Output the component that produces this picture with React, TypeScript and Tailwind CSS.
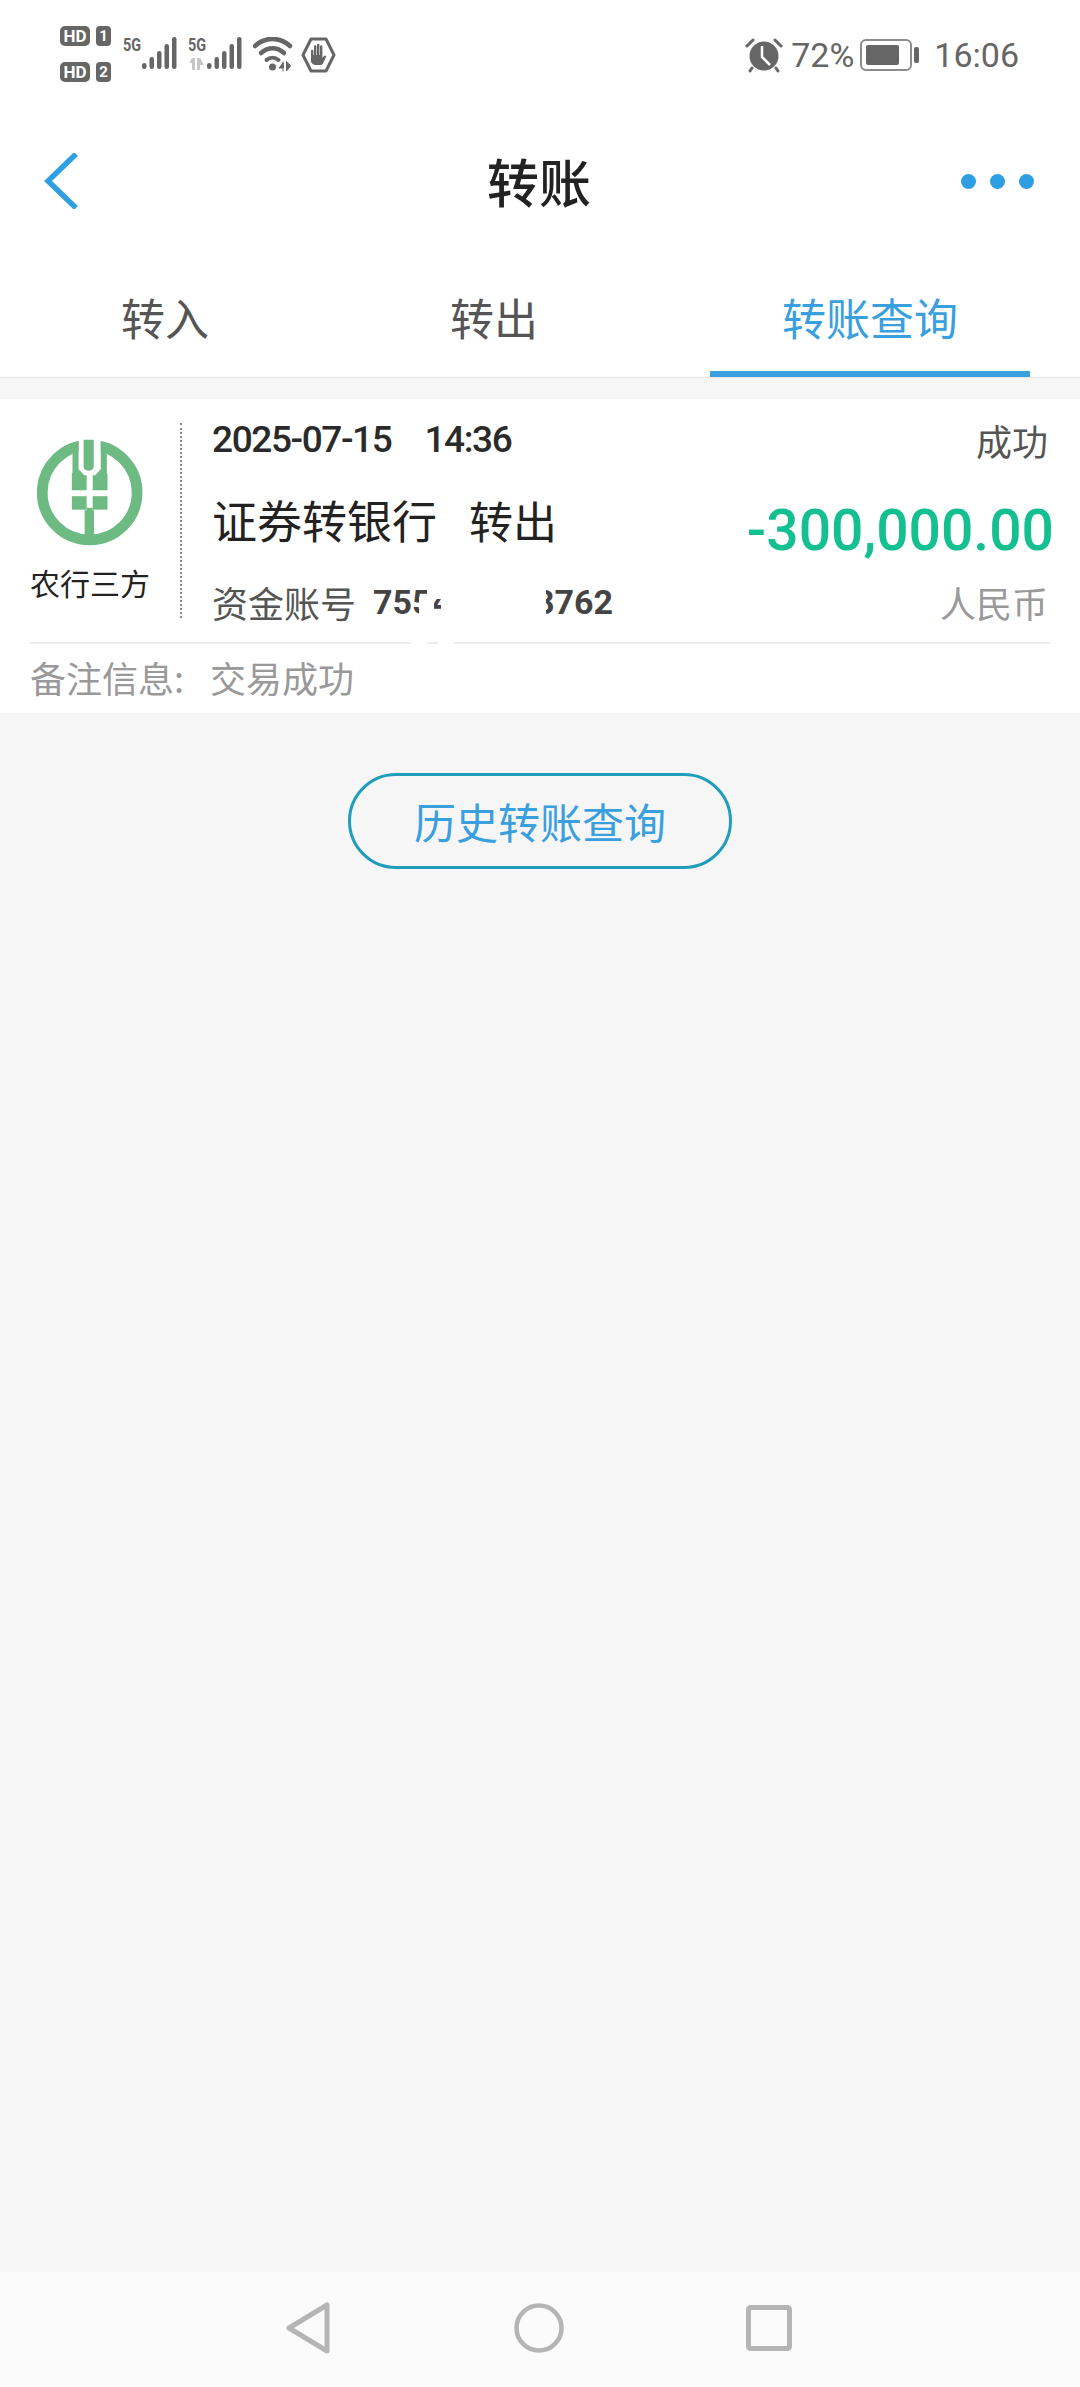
import React from "react";

const cjk = "font-['Noto_Sans_CJK_SC','Noto_Sans',sans-serif]";

function Signal({ arrows }: { arrows?: boolean }) {
  const bars = [
    [0, 26, 6],
    [7.5, 20, 12],
    [15, 14, 18],
    [22.5, 7, 25],
    [30, 0, 32],
  ];
  return (
    <div className="relative w-[54px] h-[34px]">
      <span className="absolute left-0 top-[-3px] font-['Roboto',sans-serif] font-bold text-[18px] leading-[21px] text-[#666666] scale-x-[0.8] origin-left">5G</span>
      <svg className="absolute left-0 top-0" width="54" height="36" viewBox="0 0 54 36">
        {arrows && (
          <path d="M4 21 h3 v12 h-3 v-7 h-3 z M9 21 h3 l4 7 h-4 v5 h-3 z" fill="#c8c8c8" />
        )}
        <g transform="translate(19 0)" fill="#666666">
          {bars.map(([x, y, h]) => (
            <rect key={x} x={x} y={y} width="4.500" height={h} rx="2.250" />
          ))}
        </g>
      </svg>
    </div>
  );
}

function StatusBar() {
  return (
    <div className="h-[100px] flex items-start justify-between pt-[26px] pl-[60px] pr-[61px] text-[#666666]">
      <div className="flex items-start">
        <div className="w-[51px] flex flex-col gap-[16px]">
          {["1", "2"].map((n) => (
            <div key={n} className="flex items-center gap-[6px] h-[20px]">
              <span className="w-[30px] h-[20px] rounded-[5px] bg-[#666666] text-white font-['Roboto',sans-serif] font-bold text-[17px] leading-[20px] text-center">HD</span>
              <span className="w-[15px] h-[20px] rounded-[4px] bg-[#666666] text-white font-['Roboto',sans-serif] font-bold text-[15px] leading-[20px] text-center">{n}</span>
            </div>
          ))}
        </div>
        <div className="flex items-start ml-[12px] mt-[11px] gap-[11px]">
          <Signal />
          <Signal arrows />
          <svg width="40" height="36" viewBox="0 0 40 36" fill="none" stroke="#666666" strokeLinecap="round">
            <path d="M2 9 C12 -0.500 27 -0.500 37 9" strokeWidth="4.500" />
            <path d="M8 16 C15 9.500 24 9.500 31 16" strokeWidth="4.500" />
            <path d="M13.500 23 C17 20 22 20 25.500 23" strokeWidth="4" />
            <circle cx="19.500" cy="30" r="3.500" fill="#666666" stroke="none" />
            <path d="M30 26l-4 5h4zM30 25v9M33.500 25v9l4-5z" fill="#666666" stroke="#666666" strokeWidth="1" />
          </svg>
          <svg className="ml-[-3px]" width="36" height="36" viewBox="0 0 36 36">
            <path d="M10 2 H25 L33 18 L25 34 H10 L2 18 Z" fill="none" stroke="#666666" strokeWidth="3" strokeLinejoin="round" />
            <path d="M10 14 a1.200 1.200 0 0 1 2.400 0 V18 h0.600 V9.500 a1.200 1.200 0 0 1 2.400 0 V18 h0.600 V8 a1.200 1.200 0 0 1 2.400 0 V18 h0.600 V9.500 a1.200 1.200 0 0 1 2.400 0 V21 l1.500-2 c1-1.300 2.800 0 2 1.200 L22 26.500 c-0.700 1-1.500 1.500-3 1.500 H15 c-3 0-5-1.800-5-4 Z" fill="#666666" />
          </svg>
        </div>
      </div>
      <div className="flex items-center mt-[11px] h-[36px]">
        <svg width="38" height="36" viewBox="0 0 38 36">
          <circle cx="19" cy="19" r="14.500" fill="#666666" />
          <path d="M2 9 L8 3 M36 9 L30 3 M7 31 L5 34 M31 31 L33 34" stroke="#666666" strokeWidth="3" strokeLinecap="round" />
          <path d="M17 9 V20 L25 28" fill="none" stroke="#ffffff" strokeWidth="2.500" />
        </svg>
        <span className={"ml-[8px] font-['Roboto',sans-serif] text-[34px] leading-[36px]"}>72%</span>
        <div className="ml-[6px] w-[52px] h-[32px] rounded-[6px] border-[2.500px] border-[#8c8c8c] p-[4px] flex">
          <div className="w-[33px] bg-[#666666] rounded-[2px]" />
        </div>
        <div className="ml-[2px] w-[5px] h-[16px] rounded-[2px] bg-[#666666]" />
        <span className={"ml-[15px] font-['Roboto',sans-serif] text-[34px] leading-[36px]"}>16:06</span>
      </div>
    </div>
  );
}

function Header() {
  return (
    <div className="h-[162px] flex items-center pl-[44px] pr-[46px]">
      <div className="flex-1">
        <svg width="34" height="56" viewBox="0 0 34 56" fill="none" stroke="#2f9fe4" strokeWidth="5.500" strokeLinecap="square">
          <path d="M30 3 L4 28 L30 53" />
        </svg>
      </div>
      <span className={`${cjk} text-[52px] leading-[60px] font-medium text-[#222222]`}>转账</span>
      <div className="flex-1 flex justify-end gap-[14px]">
        {[0, 1, 2].map((i) => (
          <span key={i} className="w-[15px] h-[15px] rounded-full bg-[#2f9fe4]" />
        ))}
      </div>
    </div>
  );
}

function Tabs() {
  return (
    <div className="flex h-[116px] border-b border-[#e6e6e6] items-stretch">
      <div className={`${cjk} w-[330px] flex justify-center pt-[25px] text-[44px] leading-[60px] text-[#555555]`}>转入</div>
      <div className={`${cjk} w-[328px] flex justify-center pt-[25px] text-[44px] leading-[60px] text-[#555555]`}>转出</div>
      <div className="ml-[52px] w-[320px] border-b-[6px] border-[#3a9fdf] flex justify-center">
        <span className={`${cjk} pt-[25px] text-[44px] leading-[60px] text-[#3a9fdf]`}>转账查询</span>
      </div>
    </div>
  );
}

function AbcLogo() {
  return (
    <svg width="106" height="107" viewBox="25 28 314 318">
      <circle cx="181" cy="187" r="141" fill="none" stroke="#6dba82" strokeWidth="32" />
      <rect x="148" y="20" width="66" height="60" fill="#ffffff" />
      <g fill="#6dba82">
        <path d="M163 30 H193 V110 Q193 122 178 122 Q163 122 163 110 Z" />
        <path d="M130 58 L148 34 V118 L165 136 H172 V180 H128 V132 L130 128 Z" />
        <path d="M232 58 L214 34 V118 L197 136 H190 V180 H234 V132 L232 128 Z" />
        <path d="M128 198 H172 V238 H128 Z" />
        <path d="M190 198 H234 V238 H190 Z" />
        <path d="M166 240 H172 V232 H190 V240 H194 V322 H166 Z" />
      </g>
    </svg>
  );
}

function Card() {
  return (
    <div className="mt-[21px] bg-white h-[314px] flex flex-col">
      <div className="h-[243px] flex">
        <div className="w-[180px] flex flex-col items-center pt-[40px]">
          <AbcLogo />
          <span className={`${cjk} mt-[18px] text-[30px] leading-[36px] text-[#222222]`}>农行三方</span>
        </div>
        <div className="mt-[24px] h-[195px] border-l-2 border-dotted border-[#8a8a8a]" />
        <div className="flex-1 ml-[30px] mr-[30px] pt-[20px]">
          <div className="flex items-center h-[42px]">
            <span className="font-['Roboto',sans-serif] font-medium text-[37px] leading-[42px] tracking-[-1.400px] text-[#2a2a2a]">2025-07-15</span>
            <span className="ml-[33px] font-['Roboto',sans-serif] font-medium text-[37px] leading-[42px] tracking-[-1.400px] text-[#2a2a2a]">14:36</span>
            <span className={`${cjk} ml-auto mr-[2px] text-[36px] leading-[42px] text-[#555555]`}>成功</span>
          </div>
          <div className="flex items-center mt-[38px] h-[60px]">
            <span className={`${cjk} mb-[18px] text-[45px] leading-[60px] text-[#222222]`}>证券转银行</span>
            <span className={`${cjk} mb-[18px] ml-[32px] text-[44px] leading-[60px] text-[#222222]`}>转出</span>
            <span className="ml-auto mt-[3px] mr-[-4px] font-['Roboto',sans-serif] font-medium text-[57px] leading-[60px] text-[#14c08f]">-300,000.00</span>
          </div>
          <div className="flex items-center mt-[20px] h-[46px]">
            <span className={`${cjk} text-[36px] leading-[46px] text-[#555555]`}>资金账号</span>
            <span className="relative ml-[17px] w-[240px] flex justify-between font-['Roboto',sans-serif] font-bold text-[34px] leading-[46px] text-[#444444]">
              <span>7554</span>
              <span>8762</span>
              <span className="absolute left-[54px] top-0 w-[7px] h-[46px] bg-white" />
              <span className="absolute left-[68px] top-0 w-[105px] h-[46px] bg-white" />
              <span className="absolute left-[46px] top-[18px] w-[10px] h-[28px] bg-white" />
              <span className="absolute left-[61px] top-0 w-[7px] h-[20px] bg-white" />
            </span>
            <span className={`${cjk} ml-auto mr-[2px] text-[36px] leading-[46px] text-[#999999]`}>人民币</span>
          </div>
        </div>
      </div>
      <div className="relative ml-[30px] mr-[30px] border-t-2 border-[#ececec] pt-[10px] flex gap-[26px]">
        <span className="absolute left-[381px] top-[-2px] w-[16px] h-[2px] bg-white" />
        <span className="absolute left-[408px] top-[-2px] w-[16px] h-[2px] bg-white" />
        <span className={`${cjk} text-[36px] leading-[46px] text-[#999999]`}>备注信息:</span>
        <span className={`${cjk} text-[36px] leading-[46px] text-[#999999]`}>交易成功</span>
      </div>
    </div>
  );
}

export default function App() {
  return (
    <div className="w-[1080px] h-[2387px] bg-[#f6f6f6] flex flex-col overflow-hidden">
      <div className="bg-white">
        <StatusBar />
        <Header />
        <Tabs />
      </div>
      <Card />
      <div className="flex justify-center mt-[60px]">
        <button className={`${cjk} w-[384px] h-[96px] rounded-full border-[3px] border-[#1f9dbb] text-[42px] leading-[60px] text-[#3a9fdf]`}>历史转账查询</button>
      </div>
      <div className="mt-auto h-[115px] bg-[#fbfbfb] flex items-center justify-between pl-[285px] pr-[288px] pb-[3px]">
        <svg width="46" height="52" viewBox="0 0 46 52" fill="none" stroke="#b5b5b5" strokeWidth="5" strokeLinejoin="round"><path d="M42 3 V49 L4 26 Z" /></svg>
        <svg width="52" height="52" viewBox="0 0 52 52" fill="none" stroke="#b5b5b5" strokeWidth="4.500"><circle cx="26" cy="26" r="22.500" /></svg>
        <svg width="46" height="46" viewBox="0 0 46 46" fill="none" stroke="#b5b5b5" strokeWidth="5"><rect x="2.500" y="2.500" width="41" height="41" rx="2" /></svg>
      </div>
    </div>
  );
}
